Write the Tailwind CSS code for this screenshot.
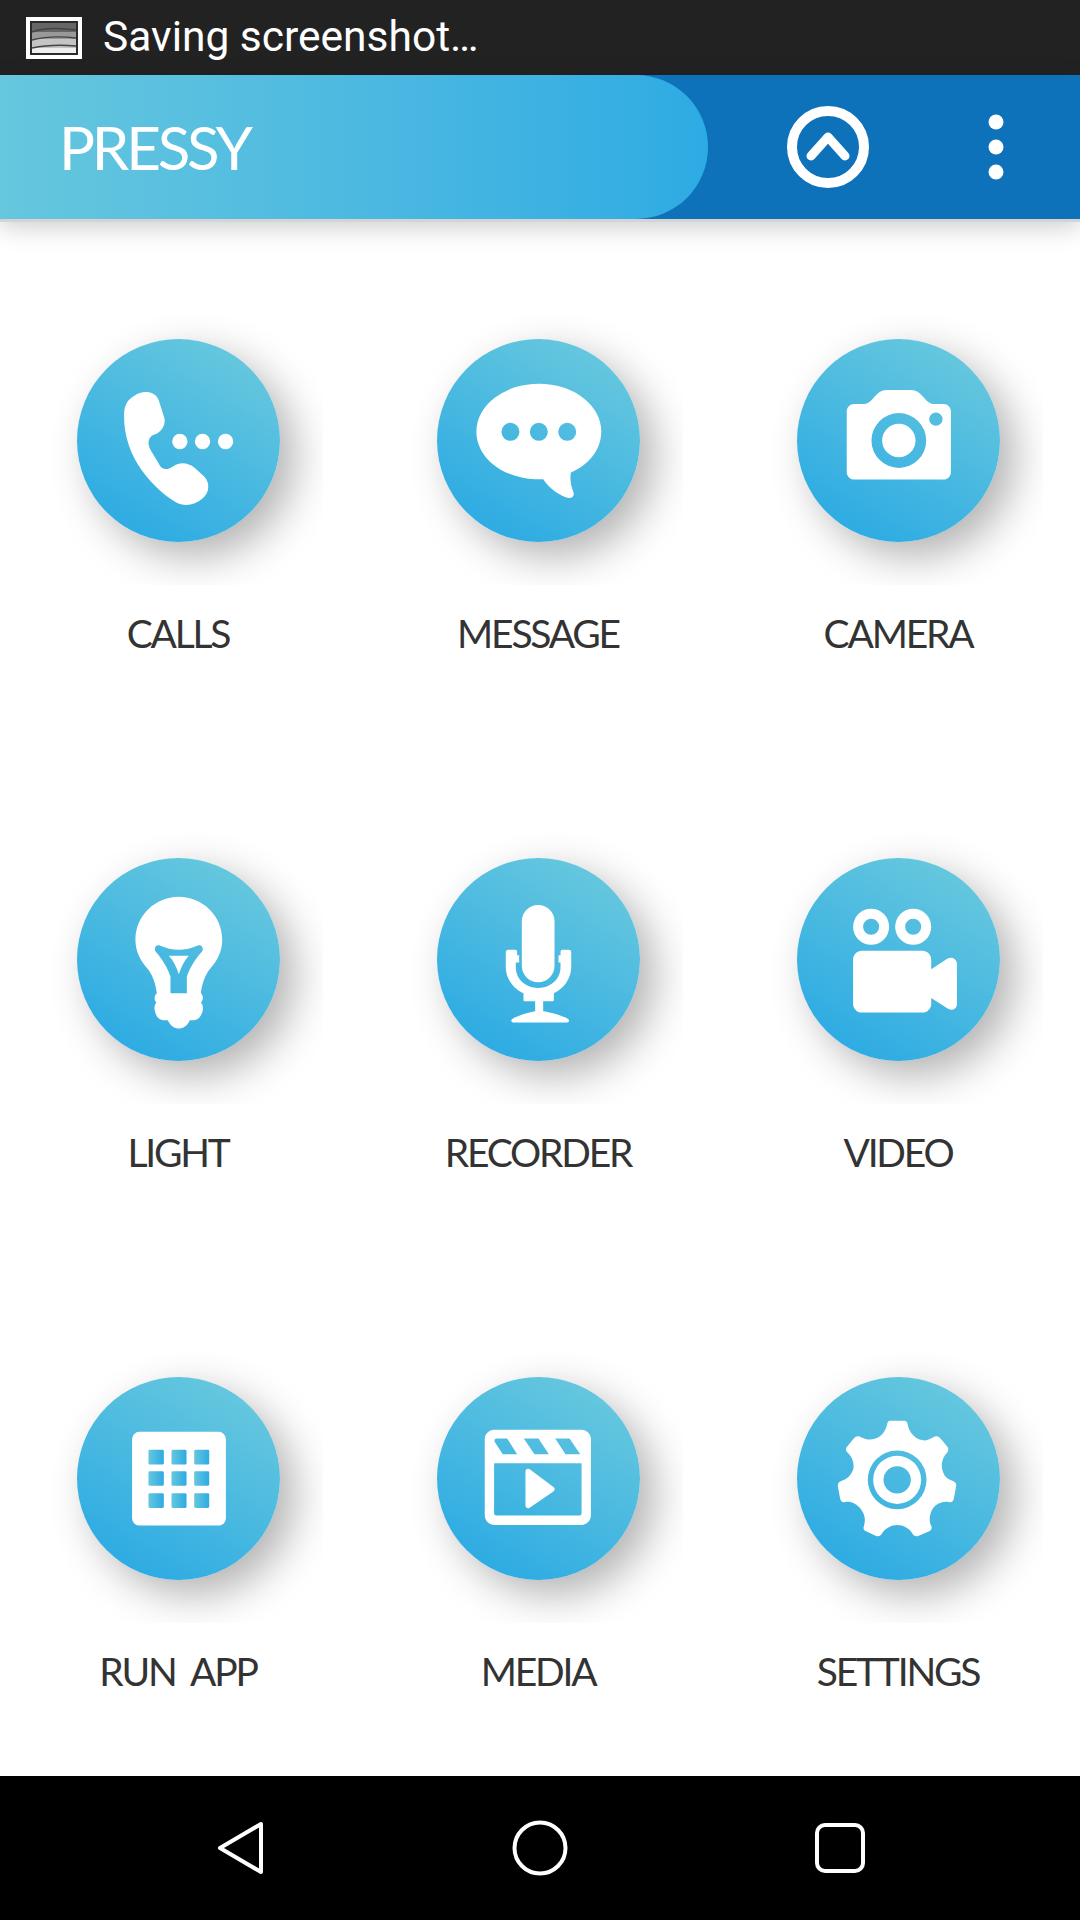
<!doctype html>
<html><head><meta charset="utf-8"><script src="https://cdn.jsdelivr.net/npm/@tailwindcss/browser@4"></script></head>
<body class="m-0">
<div class="w-[1080px] h-[1920px] flex flex-col bg-white overflow-hidden font-['Lato',sans-serif]">
  <header class="h-[75px] bg-[#222222] flex items-center pl-[26px] gap-[21px] shrink-0">
    <svg width="56" height="42" viewBox="0 0 56 42"><rect width="56" height="42" fill="#fff"/><rect x="4" y="4" width="48" height="34" fill="#2b2b2b"/><rect x="6" y="6" width="44" height="9" fill="#666"/><rect x="6" y="15" width="44" height="7" fill="#999"/><rect x="6" y="22" width="44" height="9" fill="#c4c4c4"/><rect x="6" y="31" width="44" height="5" fill="#eee"/><path d="M6 15 Q20 9 50 13M6 23 Q25 18 50 21M6 31 Q25 27 50 29" stroke="#444" stroke-width="1.5" fill="none"/></svg>
    <span class="font-['Roboto',sans-serif] text-white text-[42.5px] leading-none">Saving screenshot…</span>
  </header>
  <div class="relative z-10 h-[144px] bg-[#0e72bb] flex items-center justify-between shrink-0 shadow-[0_3px_0_#d4d4d4,0_8px_24px_rgba(0,0,0,0.2)]">
    <div class="h-full w-[708px] rounded-r-[72px] bg-linear-to-r from-[#66c7de] to-[#2dabe3] flex items-center pl-[59px]">
      <span class="text-white font-normal text-[60px] leading-none tracking-[-3.2px]">PRESSY</span>
    </div>
    <div class="flex items-center gap-[118px] pr-[76px]">
      <svg width="84" height="84" viewBox="0 0 84 84" fill="none" stroke="#fff"><circle cx="42" cy="42" r="36" stroke-width="10"/><path d="M25 51 L42 32 L59 51" stroke-width="9" stroke-linecap="round" stroke-linejoin="round"/></svg>
      <svg width="16" height="66" viewBox="0 0 16 66" fill="#fff"><circle cx="8" cy="8" r="7.5"/><circle cx="8" cy="33" r="7.5"/><circle cx="8" cy="58" r="7.5"/></svg>
    </div>
  </div>
  <main class="flex-1 min-h-0 overflow-hidden grid grid-cols-[360px_360px_360px] grid-rows-[519px_519px_1fr] ml-[-2px] pt-[76px]">
    <div class="flex flex-col items-center">
      <div class="w-[290px] h-[290px] overflow-hidden flex items-center justify-center">
        <div class="w-[203px] h-[203px] rounded-full bg-linear-[30deg,#2dabe3_12%,#66c7de_88%] shadow-[15px_15px_42px_rgba(0,0,0,0.3)]">
          <svg width="203" height="203" viewBox="112 88 608 608" fill="#fff"><path d="M253 315 C253 285 265 268 285 257 C305 243 345 240 357 272 L374 325 C378 350 362 368 342 375 C325 382 322 400 332 420 L362 470 C372 482 388 478 402 468 C420 456 445 458 465 474 L493 500 C512 520 508 550 488 566 C465 585 435 592 408 577 C350 542 250 450 253 315 Z"/><circle cx="420" cy="395" r="23"/><circle cx="488" cy="395" r="23"/><circle cx="557" cy="395" r="23"/></svg>
        </div>
      </div>
      <span class="mt-[24px] text-[39px] leading-[48px] text-[#333] tracking-[-2.2px]">CALLS</span>
    </div>
    <div class="flex flex-col items-center">
      <div class="w-[290px] h-[290px] overflow-hidden flex items-center justify-center">
        <div class="w-[203px] h-[203px] rounded-full bg-linear-[30deg,#2dabe3_12%,#66c7de_88%] shadow-[15px_15px_42px_rgba(0,0,0,0.3)]">
          <svg width="203" height="203" viewBox="110 88 608 608" fill="#fff" fill-rule="evenodd"><path d="M228 365 A187 143 0 0 1 602 365 C602 420 565 465 511 488 C508 505 510 525 518 545 C522 555 518 565 505 564 C480 560 445 535 428 508 C310 512 228 445 228 365 Z M303 366 a27 27 0 1 0 54 0 a27 27 0 1 0 -54 0 Z M388 366 a27 27 0 1 0 54 0 a27 27 0 1 0 -54 0 Z M473 366 a27 27 0 1 0 54 0 a27 27 0 1 0 -54 0 Z"/></svg>
        </div>
      </div>
      <span class="mt-[24px] text-[39px] leading-[48px] text-[#333] tracking-[-2.2px]">MESSAGE</span>
    </div>
    <div class="flex flex-col items-center">
      <div class="w-[290px] h-[290px] overflow-hidden flex items-center justify-center">
        <div class="w-[203px] h-[203px] rounded-full bg-linear-[30deg,#2dabe3_12%,#66c7de_88%] shadow-[15px_15px_42px_rgba(0,0,0,0.3)]">
          <svg width="203" height="203" viewBox="109 88 608 608" fill="#fff" fill-rule="evenodd"><path d="M280 283 H305 C325 283 332 270 345 257 C355 246 365 241 380 241 H448 C463 241 473 246 483 257 C496 270 503 283 523 283 H548 C560 283 570 293 570 305 V487 C570 499 560 509 548 509 H280 C268 509 258 499 258 487 V305 C258 293 268 283 280 283 Z M332 392 a82 82 0 1 0 164 0 a82 82 0 1 0 -164 0 Z M364 392 a50 50 0 1 0 100 0 a50 50 0 1 0 -100 0 Z M505 328 a20 20 0 1 0 40 0 a20 20 0 1 0 -40 0 Z"/></svg>
        </div>
      </div>
      <span class="mt-[24px] text-[39px] leading-[48px] text-[#333] tracking-[-2.2px]">CAMERA</span>
    </div>

    <div class="flex flex-col items-center">
      <div class="w-[290px] h-[290px] overflow-hidden flex items-center justify-center">
        <div class="w-[203px] h-[203px] rounded-full bg-linear-[30deg,#2dabe3_12%,#66c7de_88%] shadow-[15px_15px_42px_rgba(0,0,0,0.3)]">
          <svg width="203" height="203" viewBox="110 85 608 608" fill="#fff" fill-rule="evenodd"><path d="M415 201 C487 201 545 259 545 330 C545 365 530 393 510 415 C495 432 484 460 481 490 C490 498 488 512 481 518 C488 525 490 540 483 552 C476 570 462 572 448 571 C440 588 428 596 415 596 C402 596 390 588 382 571 C368 572 352 570 346 552 C340 540 341 525 348 518 C341 512 340 498 349 490 C346 460 335 432 320 415 C300 393 285 365 285 330 C285 259 343 201 415 201 Z M358 347 C345 343 338 358 348 368 C365 388 382 415 390 440 V490 H439 V440 C447 415 464 388 482 368 C492 358 485 343 472 347 C435 364 395 364 358 347 Z M385 378 H445 C432 392 422 412 415 433 C408 412 398 392 385 378 Z"/></svg>
        </div>
      </div>
      <span class="mt-[24px] text-[39px] leading-[48px] text-[#333] tracking-[-2.2px]">LIGHT</span>
    </div>
    <div class="flex flex-col items-center">
      <div class="w-[290px] h-[290px] overflow-hidden flex items-center justify-center">
        <div class="w-[203px] h-[203px] rounded-full bg-linear-[30deg,#2dabe3_12%,#66c7de_88%] shadow-[15px_15px_42px_rgba(0,0,0,0.3)]">
          <svg width="203" height="203" viewBox="112 85 608 608" fill="#fff"><rect x="366" y="226" width="98" height="231" rx="49"/><path d="M326 360 H346 Q352 360 352 366 V376 H358 V398 H348 V412 C348 445 375 474 415 474 C455 474 482 445 482 412 V398 H476 V376 H482 V366 Q482 360 488 360 H506 Q514 360 514 368 V412 C514 445 492 476 462 490 V510 Q462 514 458 514 H430 V544 C460 548 490 558 506 568 Q510 578 502 578 H340 Q332 578 336 568 C352 558 380 548 406 544 V514 H376 Q371 514 371 510 V490 C340 476 318 445 318 412 V368 Q318 360 326 360 Z"/></svg>
        </div>
      </div>
      <span class="mt-[24px] text-[39px] leading-[48px] text-[#333] tracking-[-2.2px]">RECORDER</span>
    </div>
    <div class="flex flex-col items-center">
      <div class="w-[290px] h-[290px] overflow-hidden flex items-center justify-center">
        <div class="w-[203px] h-[203px] rounded-full bg-linear-[30deg,#2dabe3_12%,#66c7de_88%] shadow-[15px_15px_42px_rgba(0,0,0,0.3)]">
          <svg width="203" height="203" viewBox="112 85 608 608" fill="#fff" fill-rule="evenodd"><path d="M280 291 a54 54 0 1 0 108 0 a54 54 0 1 0 -108 0 Z M310 291 a24 24 0 1 0 48 0 a24 24 0 1 0 -48 0 Z M406 291 a54 54 0 1 0 108 0 a54 54 0 1 0 -108 0 Z M436 291 a24 24 0 1 0 48 0 a24 24 0 1 0 -48 0 Z"/><path d="M306 363 H488 C502 363 514 375 514 389 V418 L563 386 C576 379 591 388 591 402 V522 C591 537 575 544 563 536 L514 504 V522 C514 536 502 548 488 548 H306 C292 548 280 536 280 522 V389 C280 375 292 363 306 363 Z"/></svg>
        </div>
      </div>
      <span class="mt-[24px] text-[39px] leading-[48px] text-[#333] tracking-[-2.2px]">VIDEO</span>
    </div>

    <div class="flex flex-col items-center">
      <div class="w-[290px] h-[290px] overflow-hidden flex items-center justify-center">
        <div class="w-[203px] h-[203px] rounded-full bg-linear-[30deg,#2dabe3_12%,#66c7de_88%] shadow-[15px_15px_42px_rgba(0,0,0,0.3)]">
          <svg width="203" height="203" viewBox="108 82 608 608" fill="#fff"><defs><linearGradient id="g"><stop offset="0" stop-color="#66c7de"/><stop offset="1" stop-color="#2dabe3"/></linearGradient></defs><rect x="273" y="246" width="281" height="281" rx="22"/><g fill="url(#g)"><rect x="322" y="300" width="46" height="44" rx="4"/><rect x="391" y="300" width="45" height="44" rx="4"/><rect x="459" y="300" width="45" height="44" rx="4"/><rect x="322" y="364" width="46" height="44" rx="4"/><rect x="391" y="364" width="45" height="44" rx="4"/><rect x="459" y="364" width="45" height="44" rx="4"/><rect x="322" y="430" width="46" height="44" rx="4"/><rect x="391" y="430" width="45" height="44" rx="4"/><rect x="459" y="430" width="45" height="44" rx="4"/></g></svg>
        </div>
      </div>
      <span class="mt-[24px] text-[39px] leading-[48px] text-[#333] tracking-[-2.2px] [word-spacing:8px]">RUN APP</span>
    </div>
    <div class="flex flex-col items-center">
      <div class="w-[290px] h-[290px] overflow-hidden flex items-center justify-center">
        <div class="w-[203px] h-[203px] rounded-full bg-linear-[30deg,#2dabe3_12%,#66c7de_88%] shadow-[15px_15px_42px_rgba(0,0,0,0.3)]">
          <svg width="203" height="203" viewBox="108 82 608 608" fill="#fff" fill-rule="evenodd"><path d="M279 240 H541 C556 240 569 253 569 268 V497 C569 512 556 525 541 525 H279 C264 525 251 512 251 497 V268 C251 253 264 240 279 240 Z M279 340 V490 Q279 497 286 497 H534 Q541 497 541 490 V340 Z M288 266 Q277 266 281 277 L305 313 H348 L318 266 Z M368 266 L400 313 H443 L412 266 Z M462 266 L493 313 H537 L505 266 Z"/><path d="M381 365 L452 418 L381 467 Z" stroke="#fff" stroke-width="16" stroke-linejoin="round"/></svg>
        </div>
      </div>
      <span class="mt-[24px] text-[39px] leading-[48px] text-[#333] tracking-[-2.2px]">MEDIA</span>
    </div>
    <div class="flex flex-col items-center">
      <div class="w-[290px] h-[290px] overflow-hidden flex items-center justify-center">
        <div class="w-[203px] h-[203px] rounded-full bg-linear-[30deg,#2dabe3_12%,#66c7de_88%] shadow-[15px_15px_42px_rgba(0,0,0,0.3)]">
          <svg width="203" height="203" viewBox="107 82 608 608" fill="#fff" fill-rule="evenodd"><path d="M385 213 H428 Q436 213 438 222 C442 250 465 272 490 272 C500 272 510 264 520 260 Q530 258 537 266 L558 292 Q563 300 557 308 C540 325 535 350 548 375 C555 388 570 392 577 395 Q584 398 584 407 L577 445 Q575 458 563 457 C540 452 510 465 505 500 C503 515 507 525 510 530 Q512 540 503 544 L470 558 Q460 562 454 553 C445 535 425 525 407 525 C390 525 370 535 360 553 Q354 562 344 558 L312 543 Q304 540 307 530 C312 515 312 495 300 480 C285 460 265 453 250 457 Q238 458 236 445 L229 407 Q229 398 236 395 C250 390 265 385 275 360 C280 340 272 320 258 308 Q250 300 256 292 L277 266 Q284 258 294 260 C315 272 335 272 352 262 C368 252 375 235 377 222 Q379 213 385 213 Z M319 390 a88 88 0 1 0 176 0 a88 88 0 1 0 -176 0 Z M335 390 a72 72 0 1 0 144 0 a72 72 0 1 0 -144 0 Z M366 390 a41 41 0 1 0 82 0 a41 41 0 1 0 -82 0 Z"/></svg>
        </div>
      </div>
      <span class="mt-[24px] text-[39px] leading-[48px] text-[#333] tracking-[-2.2px]">SETTINGS</span>
    </div>
  </main>
  <nav class="h-[144px] bg-black flex items-center justify-between pl-[217px] pr-[215px] shrink-0">
    <svg width="48" height="54" viewBox="0 0 48 54" fill="none" stroke="#fff" stroke-width="4" stroke-linejoin="round"><path d="M44 3 V51 L3 27 Z"/></svg>
    <svg width="56" height="56" viewBox="0 0 56 56" fill="none" stroke="#fff" stroke-width="4"><circle cx="28" cy="28" r="25.5"/></svg>
    <svg width="50" height="50" viewBox="0 0 50 50" fill="none" stroke="#fff" stroke-width="4"><rect x="2" y="2" width="46" height="46" rx="8"/></svg>
  </nav>
</div>
</body></html>
